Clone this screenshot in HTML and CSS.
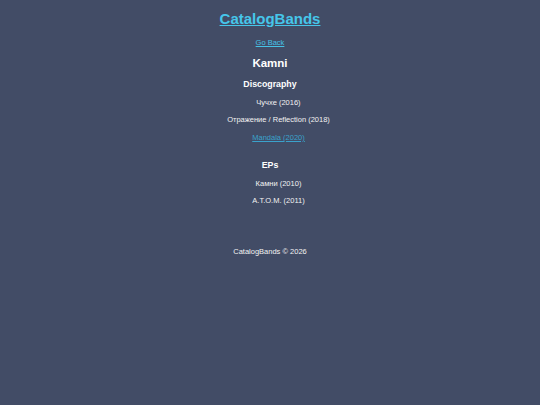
FILE: index.html
```html
<!DOCTYPE html>
<html lang="en">
<head>
<meta charset="utf-8">
<title>CatalogBands - Kamni</title>
<link rel="stylesheet" href="styles.css">
</head>
<body>
<div class="page">
  <header class="site-header">
    <h1 class="brand"><a href="#">CatalogBands</a></h1>
  </header>
  <main class="band">
    <p class="back"><a href="#">Go Back</a></p>
    <h2 class="band-name">Kamni</h2>
    <section class="group">
      <h3 class="group-title">Discography</h3>
      <ul class="releases">
        <li>Чучхе (2016)</li>
        <li>Отражение / Reflection (2018)</li>
        <li><a class="release-link" href="#">Mandala (2020)</a></li>
      </ul>
    </section>
    <section class="group">
      <h3 class="group-title">EPs</h3>
      <ul class="releases">
        <li>Камни (2010)</li>
        <li>А.Т.О.М. (2011)</li>
      </ul>
    </section>
  </main>
  <footer class="site-footer">
    <p>CatalogBands © 2026</p>
  </footer>
</div>
</body>
</html>
```
FILE: styles.css
```css
html, body {
  margin: 0;
  padding: 0;
  background: #424c66;
}

body {
  font-family: "Liberation Sans", Arial, sans-serif;
  font-size: 7.5px;
  color: #f2f2f2;
}

.page {
  display: flex;
  flex-direction: column;
  align-items: center;
  padding-top: 10px;
}

.site-header,
.band,
.group,
.site-footer {
  display: flex;
  flex-direction: column;
  align-items: center;
}

.brand {
  margin: 0;
  font-size: 15px;
  font-weight: bold;
  line-height: normal;
}

.brand a {
  color: #46c6ea;
}

.back {
  margin: 11.4px 0 0;
}

.back a {
  color: #46c2e6;
}

.band-name {
  margin: 9.7px 0 0;
  font-size: 11.5px;
  font-weight: bold;
  color: #ffffff;
}

.group {
  margin-top: 9.5px;
}

.group + .group {
  margin-top: 17.8px;
}

.group-title {
  margin: 0;
  font-size: 8.8px;
  font-weight: bold;
  color: #ffffff;
}

.releases {
  list-style: none;
  margin: 9.3px 0 0;
  padding: 0 0 0 17px;
  display: flex;
  flex-direction: column;
  align-items: center;
  gap: 8.5px;
}

.releases li {
  line-height: normal;
}

.release-link {
  color: #3aa2cc;
}

.site-footer {
  margin-top: 41.8px;
}

.site-footer p {
  margin: 0;
}
```
